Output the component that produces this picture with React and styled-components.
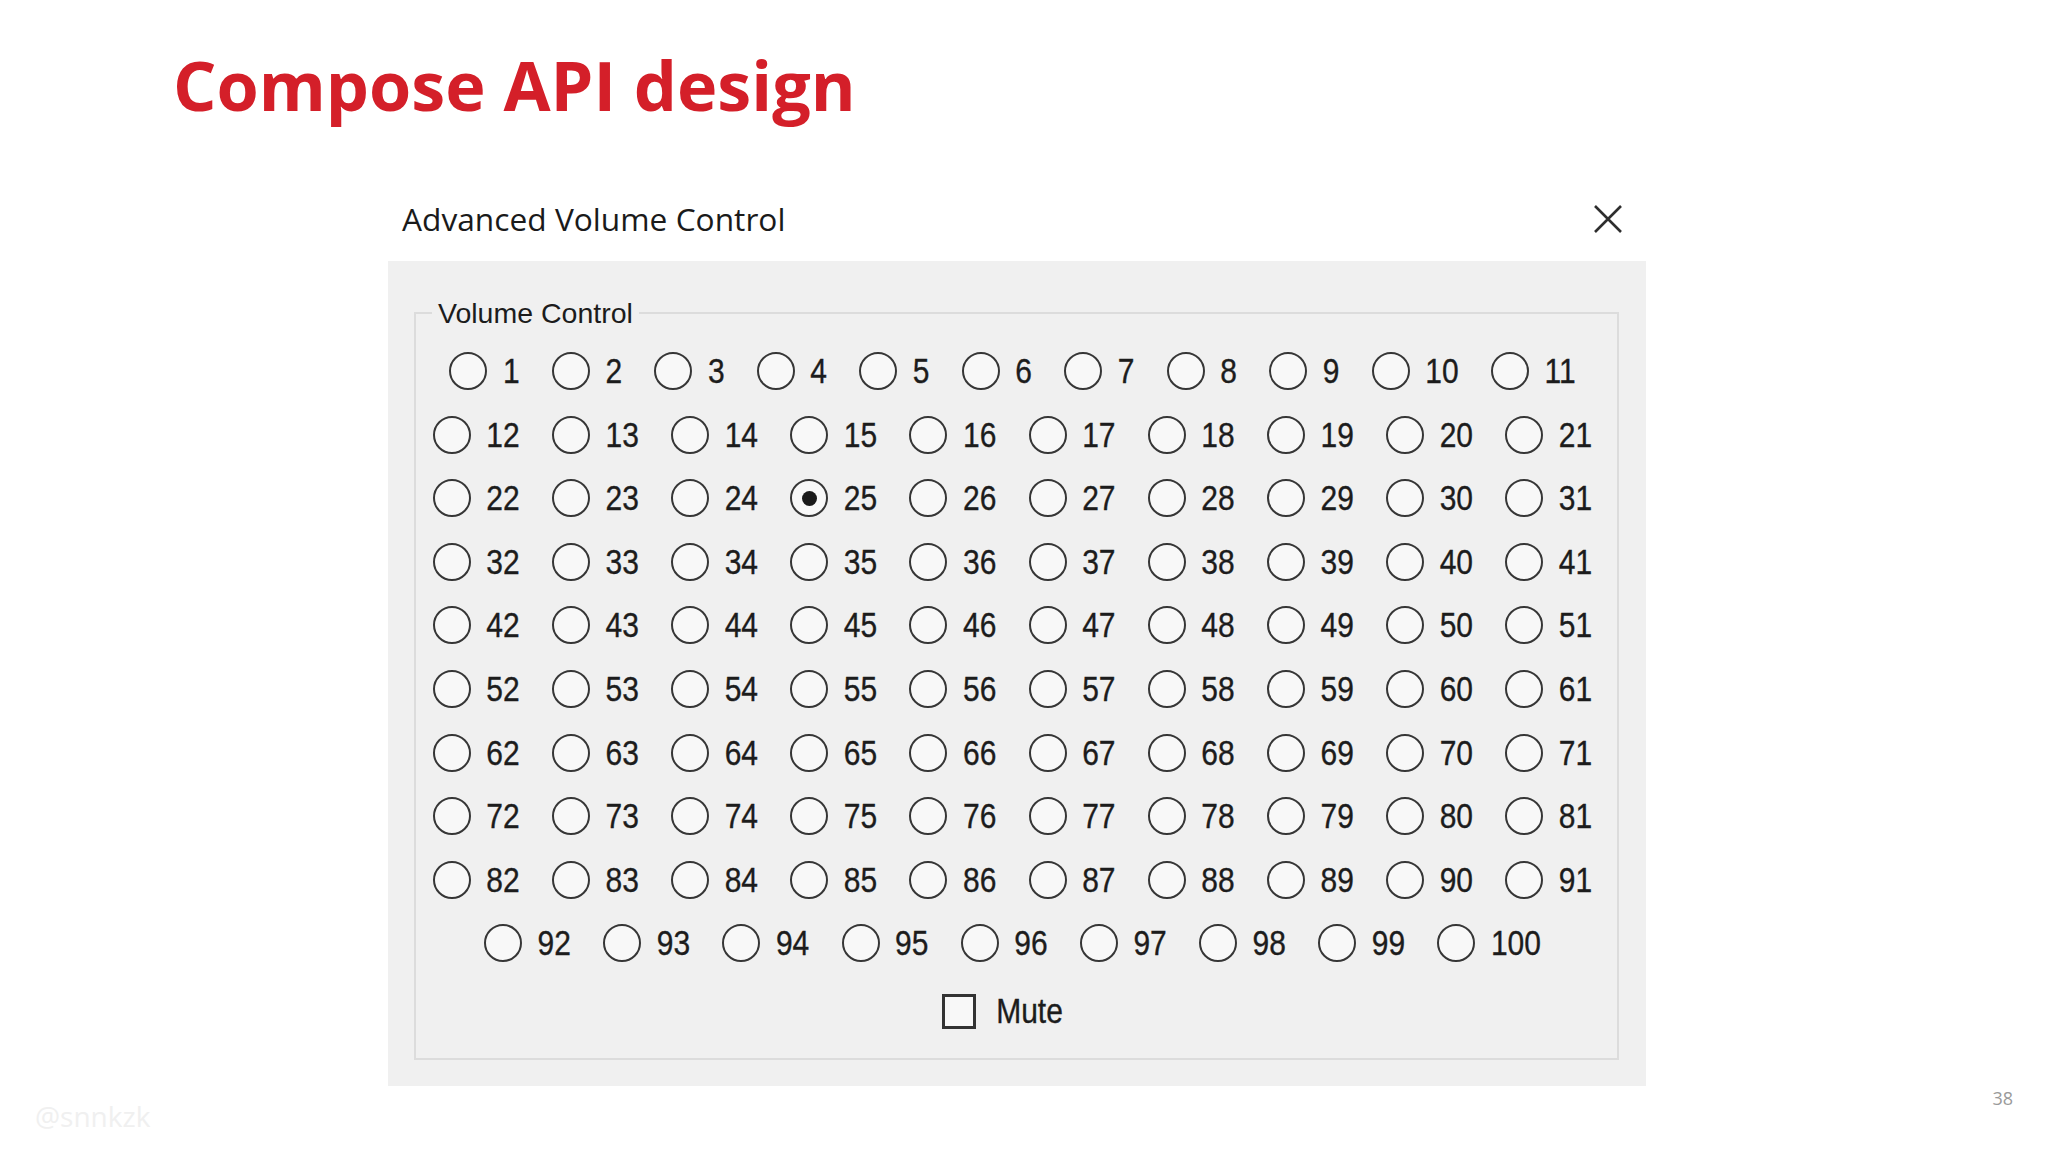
import React from "react";
import styled, { createGlobalStyle } from "styled-components";

const Global = createGlobalStyle`
  html, body { margin: 0; padding: 0; background: #ffffff; }
  body { width: 2048px; height: 1152px; overflow: hidden; }
  *, *::before, *::after { box-sizing: border-box; }
`;

const Slide = styled.div`
  width: 2048px;
  height: 1152px;
  display: flex;
  flex-direction: column;
  background: #ffffff;
`;

const Title = styled.h1`
  margin: 50px 0 0 173px;
  font-family: "Open Sans", "Noto Sans", sans-serif;
  font-weight: 700;
  font-size: 68.3px;
  line-height: 69px;
  color: #d41f29;
`;

const Dialog = styled.section`
  margin: 62px 0 0 388px;
  width: 1258px;
  display: flex;
  flex-direction: column;
`;

const TitleBar = styled.header`
  height: 80px;
  display: flex;
  align-items: center;
  justify-content: space-between;
  padding: 0 23px 5px 14px;
  background: #ffffff;
`;

const DialogTitle = styled.span`
  font-family: "Open Sans", "Noto Sans", sans-serif;
  font-size: 31.7px;
  color: #1a1a1a;
`;

const CloseButton = styled.button`
  border: 0;
  background: none;
  padding: 0;
  width: 30px;
  height: 30px;
  display: flex;
  color: #2e2e2e;
`;

const Panel = styled.div`
  background: #f0f0f0;
  padding: 36px 27px 26px 26px;
`;

const Group = styled.fieldset`
  margin: 0;
  padding: 22px 8px 27px 0;
  border: 2px solid #dcdcdc;
  min-inline-size: 0;
`;

const Legend = styled.legend`
  margin-left: 16px;
  padding: 0 6px;
  font-family: "Liberation Sans", Arial, sans-serif;
  font-size: 28.5px;
  line-height: 32px;
  color: #1c1c1c;
`;

const Flow = styled.div`
  display: flex;
  flex-wrap: wrap;
  justify-content: center;
  column-gap: 32.3px;
  row-gap: 23.6px;
`;

const Option = styled.label`
  display: flex;
  align-items: center;
  height: 40px;
  gap: ${(p) => p.$gap || 15.5}px;
`;

const Radio = styled.span`
  width: 38px;
  height: 38px;
  border-radius: 50%;
  border: 2.5px solid #363636;
  background: #f8f8f8;
  display: flex;
  align-items: center;
  justify-content: center;
  &::after {
    content: "";
    width: 15px;
    height: 15px;
    border-radius: 50%;
    background: #1a1a1a;
    display: ${(p) => (p.$checked ? "block" : "none")};
  }
`;

const Text = styled.span`
  display: inline-block;
  font-family: "Liberation Sans", Arial, sans-serif;
  font-size: 30px;
  line-height: 40px;
  color: #1c1c1c;
  -webkit-text-stroke: 0.3px #1c1c1c;
  transform: scaleY(1.16);
`;

const MuteRow = styled.div`
  display: flex;
  justify-content: center;
  margin-top: 28px;
  padding-right: 20px;
`;

const Checkbox = styled.span`
  width: 34px;
  height: 35px;
  border: 3px solid #333333;
  background: #f8f8f8;
`;

const Footer = styled.footer`
  margin-top: auto;
  height: 68px;
  display: flex;
  justify-content: space-between;
  align-items: flex-start;
  padding: 0 35px;
`;

const Watermark = styled.span`
  margin-top: 15px;
  font-family: "Open Sans", sans-serif;
  font-size: 28px;
  line-height: 30px;
  color: #f0f0f0;
`;

const PageNumber = styled.span`
  margin-top: 3px;
  font-family: "Open Sans", sans-serif;
  font-size: 18px;
  line-height: 18px;
  color: #9a9a9a;
`;

const values = Array.from({ length: 100 }, (_, i) => i + 1);

export default function App() {
  return (
    <>
      <Global />
      <Slide>
        <Title>Compose API design</Title>
        <Dialog>
          <TitleBar>
            <DialogTitle>Advanced Volume Control</DialogTitle>
            <CloseButton aria-label="Close">
              <svg width="30" height="30" viewBox="0 0 30 30">
                <path d="M2 2 L28 28 M28 2 L2 28" stroke="currentColor" strokeWidth="2.6" fill="none" />
              </svg>
            </CloseButton>
          </TitleBar>
          <Panel>
            <Group>
              <Legend>Volume Control</Legend>
              <Flow>
                {values.map((v) => (
                  <Option key={v}>
                    <Radio $checked={v === 25} />
                    <Text>{v}</Text>
                  </Option>
                ))}
              </Flow>
              <MuteRow>
                <Option $gap={20}>
                  <Checkbox />
                  <Text>Mute</Text>
                </Option>
              </MuteRow>
            </Group>
          </Panel>
        </Dialog>
        <Footer>
          <Watermark>@snnkzk</Watermark>
          <PageNumber>38</PageNumber>
        </Footer>
      </Slide>
    </>
  );
}
